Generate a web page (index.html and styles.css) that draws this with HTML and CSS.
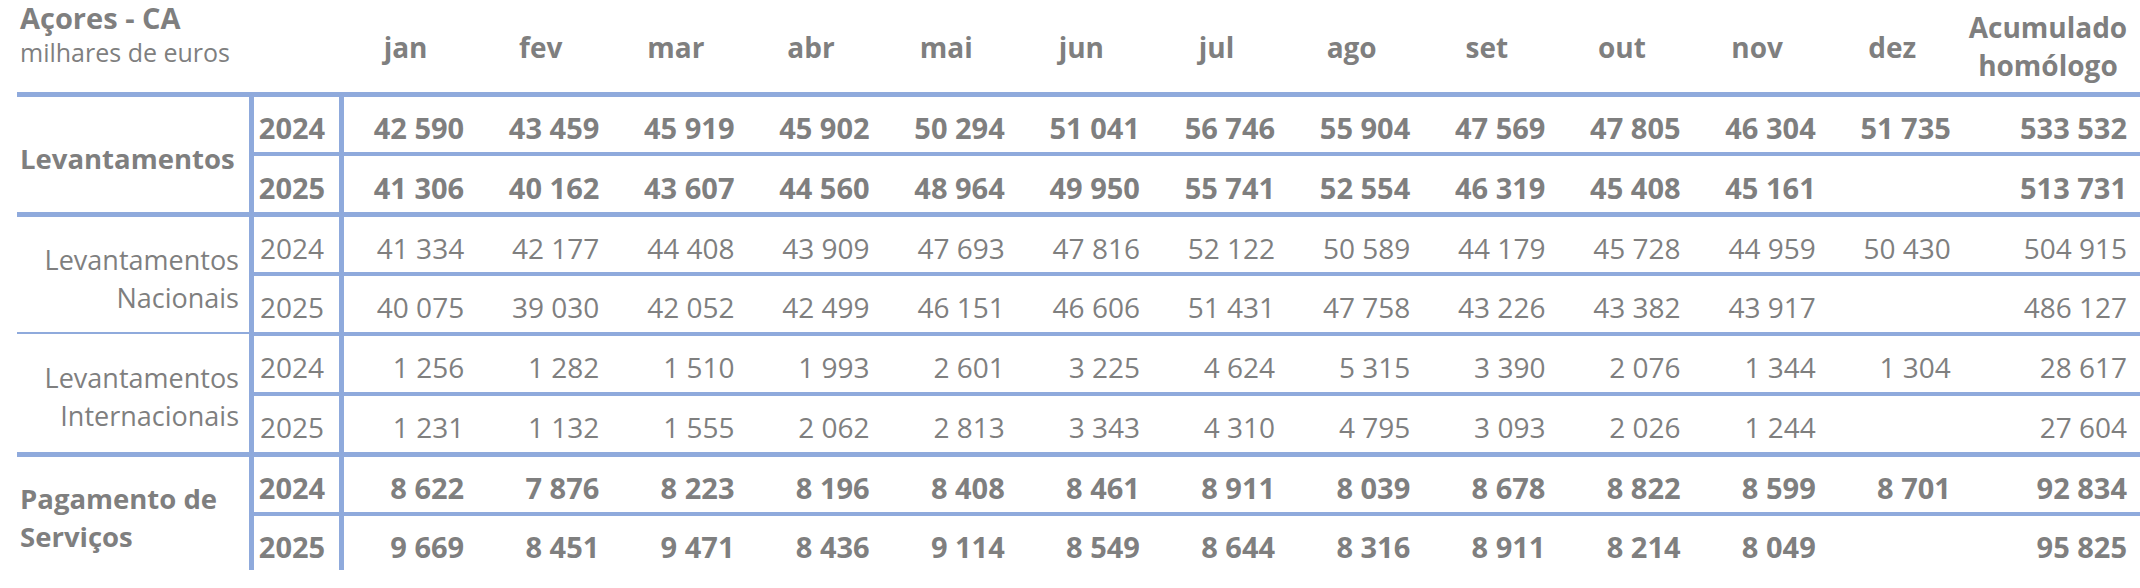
FILE: index.html
```html
<!DOCTYPE html>
<html lang="pt">
<head>
<meta charset="utf-8">
<title>Açores - CA</title>
<link rel="stylesheet" href="styles.css">
</head>
<body>
<table class="grid">
  <colgroup>
    <col class="c-label"><col class="c-year">
    <col class="c-month"><col class="c-month"><col class="c-month"><col class="c-month">
    <col class="c-month"><col class="c-month"><col class="c-month"><col class="c-month">
    <col class="c-month"><col class="c-month"><col class="c-month"><col class="c-month">
    <col class="c-acc">
  </colgroup>
  <thead>
    <tr class="head">
      <th class="title" colspan="2"><div class="title-main">Açores - CA</div><div class="title-sub">milhares de euros</div></th>
      <th class="month">jan</th><th class="month">fev</th><th class="month">mar</th><th class="month">abr</th>
      <th class="month">mai</th><th class="month">jun</th><th class="month">jul</th><th class="month">ago</th>
      <th class="month">set</th><th class="month">out</th><th class="month">nov</th><th class="month">dez</th>
      <th class="acc-head">Acumulado<br>homólogo</th>
    </tr>
  </thead>
  <tbody class="group bold">
    <tr class="r1">
      <th class="label left" rowspan="2">Levantamentos</th>
      <td class="year">2024</td>
      <td>42 590</td><td>43 459</td><td>45 919</td><td>45 902</td><td>50 294</td><td>51 041</td>
      <td>56 746</td><td>55 904</td><td>47 569</td><td>47 805</td><td>46 304</td><td>51 735</td>
      <td class="acc">533 532</td>
    </tr>
    <tr class="r2">
      <td class="year">2025</td>
      <td>41 306</td><td>40 162</td><td>43 607</td><td>44 560</td><td>48 964</td><td>49 950</td>
      <td>55 741</td><td>52 554</td><td>46 319</td><td>45 408</td><td>45 161</td><td></td>
      <td class="acc">513 731</td>
    </tr>
  </tbody>
  <tbody class="group">
    <tr class="r1">
      <th class="label right" rowspan="2">Levantamentos<br>Nacionais</th>
      <td class="year">2024</td>
      <td>41 334</td><td>42 177</td><td>44 408</td><td>43 909</td><td>47 693</td><td>47 816</td>
      <td>52 122</td><td>50 589</td><td>44 179</td><td>45 728</td><td>44 959</td><td>50 430</td>
      <td class="acc">504 915</td>
    </tr>
    <tr class="r2">
      <td class="year">2025</td>
      <td>40 075</td><td>39 030</td><td>42 052</td><td>42 499</td><td>46 151</td><td>46 606</td>
      <td>51 431</td><td>47 758</td><td>43 226</td><td>43 382</td><td>43 917</td><td></td>
      <td class="acc">486 127</td>
    </tr>
  </tbody>
  <tbody class="group thin-top">
    <tr class="r1">
      <th class="label right" rowspan="2">Levantamentos<br>Internacionais</th>
      <td class="year">2024</td>
      <td>1 256</td><td>1 282</td><td>1 510</td><td>1 993</td><td>2 601</td><td>3 225</td>
      <td>4 624</td><td>5 315</td><td>3 390</td><td>2 076</td><td>1 344</td><td>1 304</td>
      <td class="acc">28 617</td>
    </tr>
    <tr class="r2">
      <td class="year">2025</td>
      <td>1 231</td><td>1 132</td><td>1 555</td><td>2 062</td><td>2 813</td><td>3 343</td>
      <td>4 310</td><td>4 795</td><td>3 093</td><td>2 026</td><td>1 244</td><td></td>
      <td class="acc">27 604</td>
    </tr>
  </tbody>
  <tbody class="group bold">
    <tr class="r1">
      <th class="label left" rowspan="2">Pagamento de<br>Serviços</th>
      <td class="year">2024</td>
      <td>8 622</td><td>7 876</td><td>8 223</td><td>8 196</td><td>8 408</td><td>8 461</td>
      <td>8 911</td><td>8 039</td><td>8 678</td><td>8 822</td><td>8 599</td><td>8 701</td>
      <td class="acc">92 834</td>
    </tr>
    <tr class="r2 last">
      <td class="year">2025</td>
      <td>9 669</td><td>8 451</td><td>9 471</td><td>8 436</td><td>9 114</td><td>8 549</td>
      <td>8 644</td><td>8 316</td><td>8 911</td><td>8 214</td><td>8 049</td><td></td>
      <td class="acc">95 825</td>
    </tr>
  </tbody>
</table>
</body>
</html>
```

FILE: styles.css
```css
html, body {
  margin: 0;
  padding: 0;
  background: #ffffff;
}

body {
  font-family: "Open Sans", "Noto Sans", "Liberation Sans", sans-serif;
  color: #7f7f7f;
}

.grid {
  margin-left: 17px;
  width: 2123px;
  table-layout: fixed;
  border-collapse: separate;
  border-spacing: 0;
}

.c-label { width: 232px; }
.c-year { width: 95px; }
.c-month { width: 135.17px; }
.c-acc { width: 174px; }

th, td {
  padding: 0;
  white-space: nowrap;
}

/* header */
.head { height: 92px; }

.title {
  text-align: left;
  vertical-align: top;
  padding-left: 3px;
}

.title-main {
  font-size: 29px;
  font-weight: 700;
  line-height: 35px;
}

.title-sub {
  font-size: 25px;
  font-weight: 400;
  line-height: 35px;
}

.month {
  font-size: 28px;
  font-weight: 700;
  text-align: center;
  vertical-align: middle;
  padding-top: 2px;
  padding-right: 12px;
}

.acc-head {
  font-size: 28px;
  font-weight: 700;
  line-height: 38px;
  text-align: center;
  vertical-align: middle;
  padding-right: 10px;
  white-space: normal;
}

/* body */
.group td {
  font-size: 28px;
  font-weight: 400;
  text-align: right;
  vertical-align: middle;
  padding-right: 15px;
  padding-top: 6px;
}

.group.bold td {
  font-size: 29px;
  font-weight: 700;
}

.group .r1 { height: 60px; }
.group .r2 { height: 60px; }
.group .r2.last { height: 58px; }

.group .r1 td,
.group .r1 .label {
  border-top: 5px solid #8faadc;
}

.group.thin-top .r1 td {
  border-top: 4px solid #8faadc;
}

.group.thin-top .r1 .label {
  border-top: 2px solid #8faadc;
}

.group .r2 td {
  border-top: 4px solid #8faadc;
}

.group td.year {
  border-left: 5px solid #8faadc;
  border-right: 5px solid #8faadc;
  text-align: center;
  padding-right: 9px;
}

.group td.acc {
  padding-right: 13px;
}

.label {
  font-size: 27px;
  font-weight: 400;
  line-height: 38px;
  vertical-align: middle;
  padding-top: 8px;
}

.label.left {
  text-align: left;
  font-size: 27.5px;
  font-weight: 700;
  padding-left: 3px;
}

.label.right {
  text-align: right;
  padding-right: 10px;
}
```
